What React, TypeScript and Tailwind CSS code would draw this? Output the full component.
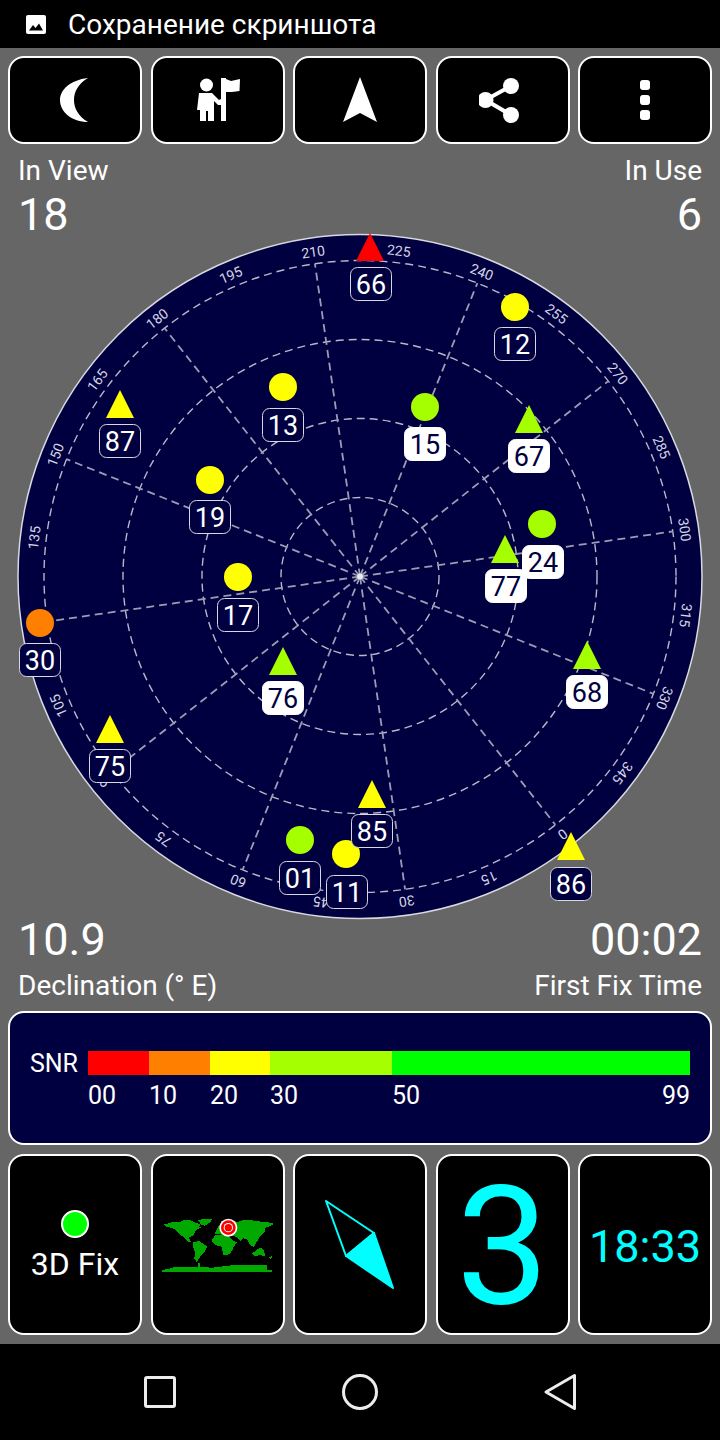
import React from "react";

const NAVY = "#000040";
const CX = 360;
const CY = 576.5;
const ROT = 141.8;

type Sat = { n: string; s: "c" | "t"; x: number; y: number; c: string; lx: number; ly: number; w?: boolean };
const R = "#ff0000", O = "#ff8000", Y = "#ffff00", L = "#a6ff00";
// x,y: circle centre or triangle apex; lx,ly: label box centre
const sats: Sat[] = [
  { n: "66", s: "t", x: 370, y: 233, c: R, lx: 371, ly: 284 },
  { n: "12", s: "c", x: 515, y: 307, c: Y, lx: 515, ly: 344 },
  { n: "87", s: "t", x: 120, y: 390, c: Y, lx: 120, ly: 441 },
  { n: "13", s: "c", x: 283, y: 387, c: Y, lx: 283, ly: 425 },
  { n: "15", s: "c", x: 425, y: 407, c: L, lx: 425, ly: 444, w: true },
  { n: "67", s: "t", x: 529, y: 405, c: L, lx: 529, ly: 456, w: true },
  { n: "19", s: "c", x: 210, y: 480, c: Y, lx: 210, ly: 517 },
  { n: "24", s: "c", x: 542, y: 524, c: L, lx: 543, ly: 562, w: true },
  { n: "77", s: "t", x: 505, y: 535, c: L, lx: 506, ly: 586, w: true },
  { n: "17", s: "c", x: 238, y: 577, c: Y, lx: 238, ly: 615 },
  { n: "30", s: "c", x: 40, y: 623, c: O, lx: 40, ly: 660 },
  { n: "76", s: "t", x: 283, y: 647, c: L, lx: 283, ly: 698, w: true },
  { n: "68", s: "t", x: 587, y: 641, c: L, lx: 587, ly: 692, w: true },
  { n: "75", s: "t", x: 110, y: 715, c: Y, lx: 110, ly: 766 },
  { n: "01", s: "c", x: 300, y: 840, c: L, lx: 300, ly: 878 },
  { n: "11", s: "c", x: 346, y: 854, c: Y, lx: 347, ly: 892 },
  { n: "85", s: "t", x: 372, y: 780, c: Y, lx: 372, ly: 831 },
  { n: "86", s: "t", x: 571, y: 832, c: Y, lx: 571, ly: 884 },
];

function polar(r: number, deg: number) {
  const b = ((deg + ROT) * Math.PI) / 180;
  return { x: CX + r * Math.sin(b), y: CY - r * Math.cos(b) };
}

function Compass() {
  const spokes = Array.from({ length: 12 }, (_, i) => i * 30);
  const labels = Array.from({ length: 24 }, (_, i) => i * 15);
  return (
    <svg viewBox="0 232 720 688" className="block w-[720px] h-[688px] overflow-visible">
      <circle cx={CX} cy={CY} r={342} fill={NAVY} stroke="#d8d8e0" strokeWidth={1.5} />
      {[79, 158, 237, 316].map((r) => (
        <circle key={r} cx={CX} cy={CY} r={r} fill="none" stroke="#b8b8c8" strokeWidth={1.4} strokeDasharray="8 5" />
      ))}
      {spokes.map((a) => {
        const p = polar(316, a);
        return (
          <line key={a} x1={CX} y1={CY} x2={p.x} y2={p.y} stroke="#9c9cb4" strokeWidth={1.8} strokeDasharray="8 5" />
        );
      })}
      <circle cx={CX} cy={CY} r={3} fill="#e8e8f0" />
      {labels.map((a) => {
        const p = polar(328, a);
        return (
          <text
            key={a}
            x={p.x}
            y={p.y}
            fill="#d4d4e0"
            fontSize={14}
            fontFamily="Roboto, sans-serif"
            textAnchor="middle"
            dominantBaseline="central"
            transform={`rotate(${a + ROT} ${p.x} ${p.y})`}
          >
            {a}
          </text>
        );
      })}
      {sats.map((s) =>
        s.s === "c" ? (
          <circle key={s.n + "m"} cx={s.x} cy={s.y} r={14} fill={s.c} />
        ) : (
          <polygon key={s.n + "m"} points={`${s.x},${s.y} ${s.x + 14},${s.y + 28} ${s.x - 14},${s.y + 28}`} fill={s.c} />
        )
      )}
      {sats.map((s) => (
        <g key={s.n}>
          <rect
            x={s.lx - 20.5}
            y={s.ly - 16.5}
            width={41}
            height={33}
            rx={7}
            fill={s.w ? "#ffffff" : NAVY}
            stroke={s.w ? "#ffffff" : "#d8d8e0"}
            strokeWidth={1}
          />
          <text
            x={s.lx}
            y={s.ly + 9.5}
            fill={s.w ? NAVY : "#ffffff"}
            fontSize={27}
            fontFamily="Roboto, sans-serif"
            textAnchor="middle"
          >
            {s.n}
          </text>
        </g>
      ))}
    </svg>
  );
}

function Btn({ children }: { children: React.ReactNode }) {
  return (
    <div className="flex items-center justify-center rounded-[16px] border-2 border-white bg-black">{children}</div>
  );
}

function WorldMap() {
  return (
    <svg viewBox="0 0 375 225" className="block w-[125px] h-[75px] -mt-1">
      <g fill="#00a800" shapeRendering="crispEdges">
        <polygon points="22,55 35,58 48,52 75,52 85,46 105,45 120,52 135,58 132,66 140,68 128,72 122,78 115,90 108,95 100,96 104,104 112,113 100,110 88,98 74,88 62,74 48,68 35,66" />
        <polygon points="128,44 172,42 165,52 150,62 140,60 132,50" />
        <polygon points="113,112 132,108 145,116 156,125 150,140 138,152 130,162 125,172 118,160 120,140 113,125" />
        <polygon points="172,102 182,90 205,88 218,92 232,105 246,112 236,125 232,135 224,148 205,150 200,125 186,122 172,112" />
        <polygon points="192,60 215,50 250,50 262,46 282,45 320,50 355,54 352,60 338,66 330,68 328,84 318,90 312,100 304,112 296,126 286,120 276,102 264,100 256,108 246,96 226,90 208,88 192,88 180,86 186,72" />
        <polygon points="292,145 308,132 320,128 328,140 330,155 315,150 300,155" />
        <polygon points="22,195 46,190 60,186 100,185 172,188 228,181 300,180 335,181 336,195 352,195 352,200 22,200" />
        <polygon points="342,158 350,152 351,156 345,162" />
        <polygon points="128,176 135,174 133,190 128,186" />
      </g>
      <circle cx={220} cy={68} r={27} fill="#ffffff" />
      <circle cx={220} cy={68} r={22} fill="#ff0000" />
      <circle cx={220} cy={68} r={14} fill="#ffffff" />
      <circle cx={220} cy={68} r={11} fill="#ff0000" />
    </svg>
  );
}

export default function App() {
  return (
    <div className="flex h-[1440px] w-[720px] flex-col overflow-hidden bg-[#666666] font-[Roboto,sans-serif] text-white">
      <div className="flex h-12 items-center bg-black pl-[26px]">
        <svg viewBox="0 0 20 19" className="h-[19px] w-5">
          <rect width="20" height="19" rx="2" fill="#ffffff" />
          <path d="M3 15.5 L7 10 L9.5 13 L13 8.5 L17 15.5 Z" fill="#000000" />
        </svg>
        <span className="ml-[22px] mt-[2px] text-[28px] leading-none">Сохранение скриншота</span>
      </div>

      <div className="mx-2 mt-2 grid h-[88px] grid-cols-5 gap-[8.5px]">
        <Btn>
          <svg viewBox="51 76 48 48" className="h-12 w-12">
            <path d="M88 78 C70 80 60 90 60 100 C60 112 72 122 88 122 C78 116 74 108 74 100 C74 92 78 84 88 78 Z" fill="#ffffff" />
          </svg>
        </Btn>
        <Btn>
          <svg viewBox="194 76 48 48" className="h-12 w-12">
            <circle cx={206.5} cy={85} r={6.5} fill="#ffffff" />
            <path d="M199 93 L212 93 L219 100 L221 99 L221 105 L218 105 L214 101 L214 121 L208 121 L208 111 L206 111 L206 121 L200 121 L200 110 L197 110 Z" fill="#ffffff" />
            <rect x={221} y={78} width={5} height={43} fill="#ffffff" />
            <path d="M226 79 L231 81 L240 79 L239.5 91 L232 92 L226 92 Z" fill="#ffffff" />
          </svg>
        </Btn>
        <Btn>
          <svg viewBox="336 76 48 48" className="h-12 w-12">
            <polygon points="360,77 377,122 360,113 343,122" fill="#ffffff" />
          </svg>
        </Btn>
        <Btn>
          <svg viewBox="479 76 48 48" className="h-12 w-12">
            <path d="M511 86 L485.5 100 L511 115" fill="none" stroke="#ffffff" strokeWidth={4} />
            <circle cx={511} cy={86} r={8} fill="#ffffff" />
            <circle cx={485.5} cy={100} r={8} fill="#ffffff" />
            <circle cx={511} cy={115} r={8} fill="#ffffff" />
          </svg>
        </Btn>
        <Btn>
          <div className="flex flex-col gap-[5px]">
            <div className="h-[10px] w-[10px] rounded-[3px] bg-white" />
            <div className="h-[10px] w-[10px] rounded-[3px] bg-white" />
            <div className="h-[10px] w-[10px] rounded-[3px] bg-white" />
          </div>
        </Btn>
      </div>

      <div className="flex h-[88px] justify-between px-[18px] pt-[12px]">
        <div>
          <div className="text-[28px] leading-[30px]">In View</div>
          <div className="mt-[6px] text-[45px] leading-[46px]">18</div>
        </div>
        <div className="text-right">
          <div className="text-[28px] leading-[30px]">In Use</div>
          <div className="mt-[6px] text-[45px] leading-[46px]">6</div>
        </div>
      </div>

      <Compass />

      <div className="flex h-[91px] justify-between px-[18px]">
        <div>
          <div className="-mt-[3px] text-[45px] leading-[46px]">10.9</div>
          <div className="mt-[8px] text-[28px] leading-[30px]">Declination (° E)</div>
        </div>
        <div className="text-right">
          <div className="-mt-[3px] text-[45px] leading-[46px]">00:02</div>
          <div className="mt-[8px] text-[28px] leading-[30px]">First Fix Time</div>
        </div>
      </div>

      <div className="mx-2 h-[134px] rounded-[16px] border-2 border-white bg-[#000040] pt-[38px]">
        <div className="flex h-6 items-center">
          <div className="w-[68px] text-right text-[25px] leading-none">SNR</div>
          <div className="ml-[10px] flex h-6 w-[602px]">
            <div className="w-[61px] bg-[#ff0000]" />
            <div className="w-[61px] bg-[#ff8000]" />
            <div className="w-[60px] bg-[#ffff00]" />
            <div className="w-[122px] bg-[#a6ff00]" />
            <div className="w-[298px] bg-[#00ff00]" />
          </div>
        </div>
        <div className="ml-[78px] mt-[9px] flex w-[602px] text-[25px] leading-[24px]">
          <div className="w-[61px]">00</div>
          <div className="w-[61px]">10</div>
          <div className="w-[60px]">20</div>
          <div className="w-[122px]">30</div>
          <div className="flex w-[298px] justify-between">
            <span>50</span>
            <span>99</span>
          </div>
        </div>
      </div>

      <div className="mx-2 mt-[9px] grid h-[181px] grid-cols-5 gap-[8.5px]">
        <div className="flex flex-col items-center justify-center rounded-[16px] border-2 border-white bg-black">
          <div className="mt-[2px] h-7 w-7 rounded-full border-2 border-white bg-[#00ff00]" />
          <div className="mt-[8px] text-[32px] leading-[36px]">3D Fix</div>
        </div>
        <div className="flex items-center justify-center rounded-[16px] border-2 border-white bg-black">
          <WorldMap />
        </div>
        <div className="flex items-center justify-center rounded-[16px] border-2 border-white bg-black">
          <svg viewBox="320 1195 80 100" className="h-[100px] w-20">
            <polygon points="326,1201 374,1233 346,1256" fill="none" stroke="#00ffff" strokeWidth={2} strokeLinejoin="round" />
            <polygon points="374,1233 393,1288 346,1256" fill="#00ffff" stroke="#00ffff" strokeWidth={2} strokeLinejoin="round" />
          </svg>
        </div>
        <div className="flex items-center justify-center rounded-[16px] border-2 border-white bg-black pt-1 text-[165px] leading-none text-[#00ffff]">
          3
        </div>
        <div className="flex items-center justify-center rounded-[16px] border-2 border-white bg-black pt-1 text-[45px] leading-none text-[#00ffff]">
          18:33
        </div>
      </div>

      <div className="mt-[9px] flex h-24 items-center justify-center bg-black">
        <div className="flex w-[200px] justify-center">
          <svg viewBox="0 0 36 36" className="h-9 w-9">
            <rect x="3.5" y="3.5" width="29" height="29" rx="1.5" fill="none" stroke="#ececec" strokeWidth={3} />
          </svg>
        </div>
        <div className="flex w-[200px] justify-center">
          <svg viewBox="0 0 36 36" className="h-9 w-9">
            <circle cx="18" cy="18" r="16.5" fill="none" stroke="#ececec" strokeWidth={3} />
          </svg>
        </div>
        <div className="flex w-[200px] justify-center">
          <svg viewBox="0 0 36 40" className="h-10 w-9">
            <polygon points="4,20 32.5,3.5 32.5,36.5" fill="none" stroke="#ececec" strokeWidth={3} strokeLinejoin="round" />
          </svg>
        </div>
      </div>
    </div>
  );
}
